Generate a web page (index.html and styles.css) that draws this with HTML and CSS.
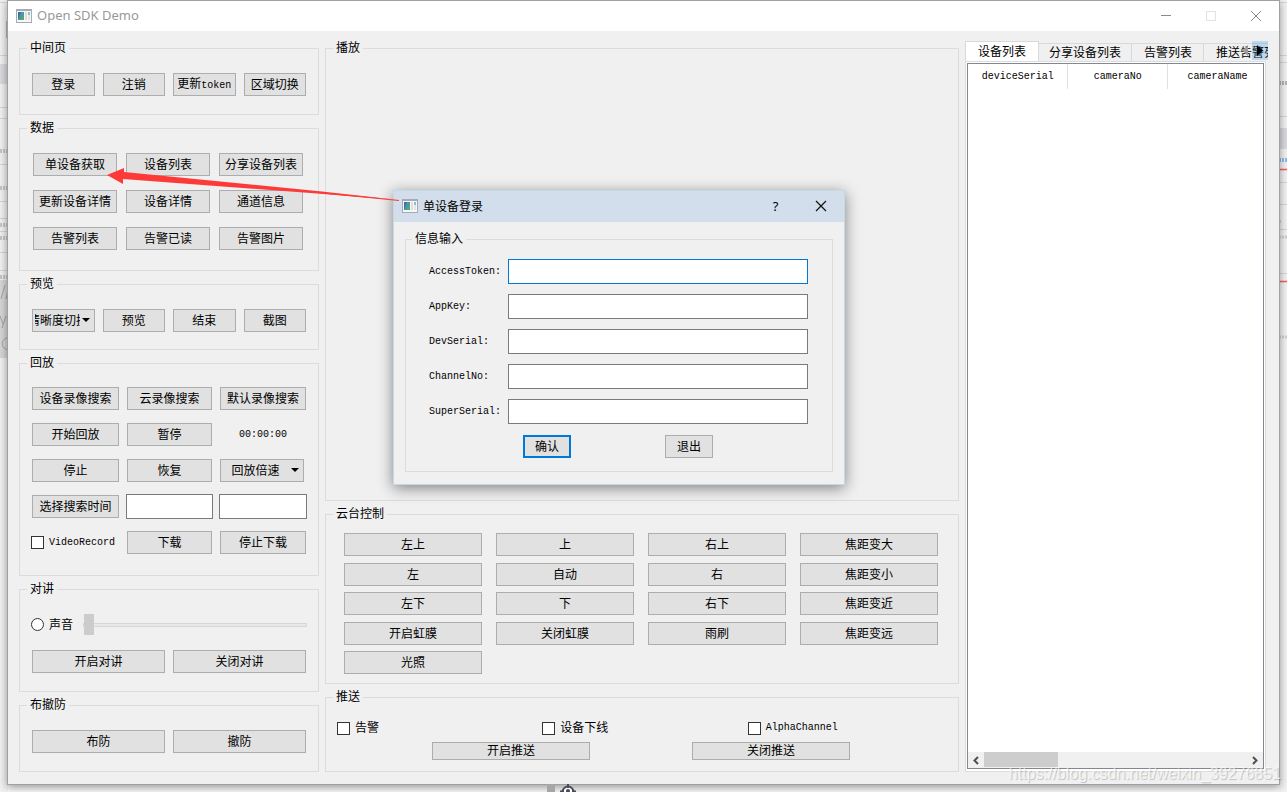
FILE: index.html
```html
<!DOCTYPE html>
<html lang="zh-CN">
<head>
<meta charset="utf-8">
<title>Open SDK Demo</title>
<link rel="stylesheet" href="styles.css">
</head>
<body>
<svg class="backdrop backdrop-left" viewBox="0 0 8 792" width="8" height="792" aria-hidden="true">
  <rect width="8" height="792" fill="#f0f0f0"/>
  <path d="M0 2.500h8M0 55.500h8M0 107.500h8M0 118.500h8M0 164.500h8M0 201.500h8M0 218.500h8M0 231.500h8M0 252.500h8M0 270.500h8" stroke="#d4d4d4"/>
  <path d="M6.500 21v17" stroke="#b8b8b8"/>
  <rect y="64" width="8" height="20" fill="#d8dadf"/>
  <path d="M0 151h8M0 188h8M0 225h8M0 238h8M0 277h8" stroke="#c4c4c4" stroke-width="4" stroke-dasharray="2 1"/>
  <rect y="280" width="8" height="78" fill="#d6d6d6"/>
  <path d="M1 299L5 285M6 299l3-14M0 316l3 8M6 316l-4 12M9 338c-8-1-10 11 0 12" fill="none" stroke="#a2a0a4"/>
</svg>
<svg class="backdrop backdrop-right" viewBox="0 0 8 792" width="8" height="792" aria-hidden="true">
  <rect width="8" height="792" fill="#f2f2f2"/>
  <path d="M0 2.500h8M0 55.500h8M0 62.500h8M0 116.500h8M0 182.500h8M0 204.500h8M0 229.500h8M0 273.500h8" stroke="#d6d6d6"/>
  <rect y="128" width="8" height="21" fill="#d8dadf"/>
  <path d="M0 83h8" stroke="#b4b4b4" stroke-width="4" stroke-dasharray="2 1"/>
  <path d="M0 160h8" stroke="#8ebcf0" stroke-width="4" stroke-dasharray="2 1"/>
  <path d="M0 221.500h2M0 237h8M0 337h8" stroke="#cfcfcf" stroke-width="3" stroke-dasharray="2 1"/>
  <path d="M0 169.500h8M0 281.500h8" stroke="#ff5858" stroke-width="1.500"/>
</svg>

<main class="window">
  <header class="titlebar">
    <svg class="app-icon" viewBox="0 0 16 14" width="16" height="14" aria-hidden="true">
      <rect x=".5" y=".5" width="15" height="13" fill="#f7f7f7" stroke="#a5abb2"/>
      <path d="M0 1h16" stroke="#a5abb2" stroke-width="2"/>
      <rect x="2" y="3" width="6" height="8" fill="#4a97a5"/><path d="M2 11V3h3z" fill="#3c70ad"/><path d="M8 5v6H4z" fill="#57a66f"/>
      <rect x="9" y="3" width="2" height="8" fill="#dedede"/><rect x="12" y="3" width="2" height="3" fill="#8fc2b8"/><rect x="12" y="6" width="2" height="5" fill="#e4e4e4"/>
    </svg>
    <h1 class="title">Open SDK Demo</h1>
    <button class="caption-button" aria-label="最小化"><svg viewBox="0 0 12 12" width="12" height="12"><path d="M1 5.500h10" stroke="#8a8a8a"/></svg></button>
    <button class="caption-button" aria-label="最大化" disabled><svg viewBox="0 0 12 12" width="12" height="12"><rect x="1.500" y="1.500" width="9" height="9" fill="none" stroke="#e2e2e2"/></svg></button>
    <button class="caption-button" aria-label="关闭"><svg viewBox="0 0 12 12" width="12" height="12"><path d="M1 1l10 10M11 1L1 11" stroke="#8a8a8a"/></svg></button>
  </header>

  <div class="content">
    <div class="column">
      <fieldset class="group">
        <legend>中间页</legend>
        <div class="grid four">
          <button class="btn">登录</button><button class="btn">注销</button><button class="btn">更新<span class="latin">token</span></button><button class="btn">区域切换</button>
        </div>
      </fieldset>
      <fieldset class="group data">
        <legend>数据</legend>
        <div class="grid three">
          <button class="btn">单设备获取</button><button class="btn">设备列表</button><button class="btn">分享设备列表</button>
          <button class="btn">更新设备详情</button><button class="btn">设备详情</button><button class="btn">通道信息</button>
          <button class="btn">告警列表</button><button class="btn">告警已读</button><button class="btn">告警图片</button>
        </div>
      </fieldset>
      <fieldset class="group preview">
        <legend>预览</legend>
        <div class="grid four">
          <span class="select-wrap"><select class="btn select clipped" aria-label="清晰度切换"><option>清晰度切换</option></select></span>
          <button class="btn">预览</button><button class="btn">结束</button><button class="btn">截图</button>
        </div>
      </fieldset>
      <fieldset class="group playback">
        <legend>回放</legend>
        <div class="grid playback-grid">
          <button class="btn">设备录像搜索</button><button class="btn">云录像搜索</button><button class="btn">默认录像搜索</button>
          <button class="btn">开始回放</button><button class="btn">暂停</button><output class="latin clock">00:00:00</output>
          <button class="btn">停止</button><button class="btn">恢复</button>
          <span class="select-wrap speed"><select class="btn select" aria-label="回放倍速"><option>回放倍速</option></select></span>
          <button class="btn">选择搜索时间</button><input class="field time" type="text" aria-label="开始时间"><input class="field time" type="text" aria-label="结束时间">
          <label class="check record"><input type="checkbox"><span class="latin">VideoRecord</span></label><button class="btn">下载</button><button class="btn">停止下载</button>
        </div>
      </fieldset>
      <fieldset class="group">
        <legend>对讲</legend>
        <div class="sound">
          <label class="check"><input type="radio"><span>声音</span></label>
          <input class="slider" type="range" min="0" max="100" value="0" aria-label="音量">
        </div>
        <div class="grid two"><button class="btn">开启对讲</button><button class="btn">关闭对讲</button></div>
      </fieldset>
      <fieldset class="group">
        <legend>布撤防</legend>
        <div class="grid two"><button class="btn">布防</button><button class="btn">撤防</button></div>
      </fieldset>
    </div>

    <div class="column">
      <fieldset class="group player"><legend>播放</legend></fieldset>
      <fieldset class="group ptz">
        <legend>云台控制</legend>
        <div class="grid ptz-grid">
          <button class="btn">左上</button><button class="btn">上</button><button class="btn">右上</button><button class="btn">焦距变大</button>
          <button class="btn">左</button><button class="btn">自动</button><button class="btn">右</button><button class="btn">焦距变小</button>
          <button class="btn">左下</button><button class="btn">下</button><button class="btn">右下</button><button class="btn">焦距变近</button>
          <button class="btn">开启虹膜</button><button class="btn">关闭虹膜</button><button class="btn">雨刷</button><button class="btn">焦距变远</button>
          <button class="btn">光照</button>
        </div>
      </fieldset>
      <fieldset class="group push">
        <legend>推送</legend>
        <div class="push-options">
          <label class="check"><input type="checkbox"><span>告警</span></label>
          <label class="check"><input type="checkbox"><span>设备下线</span></label>
          <label class="check"><input type="checkbox"><span class="latin">AlphaChannel</span></label>
        </div>
        <div class="push-actions"><button class="btn">开启推送</button><button class="btn">关闭推送</button></div>
      </fieldset>
    </div>

    <section class="lists">
      <nav class="tabs" role="tablist">
        <button class="tab active" role="tab" aria-selected="true">设备列表</button>
        <button class="tab" role="tab">分享设备列表</button>
        <button class="tab" role="tab">告警列表</button>
        <button class="tab" role="tab">推送告警列表</button>
        <button class="tab-scroll" aria-label="向左"><svg viewBox="0 0 16 19" width="16" height="19"><path d="M12 4v11L6 9.500z" fill="#9c9c9c"/></svg></button>
        <button class="tab-scroll next" aria-label="向右"><svg viewBox="0 0 16 19" width="16" height="19"><path d="M5 4v11l6-5.500z" fill="#000"/></svg></button>
      </nav>
      <div class="pane">
        <div class="table-box">
          <div class="table-view">
            <table class="table">
              <thead><tr><th class="latin">deviceSerial</th><th class="latin">cameraNo</th><th class="latin">cameraName</th></tr></thead>
            </table>
          </div>
          <div class="scrollbar">
            <button class="scroll-button" aria-label="向左滚动"><svg viewBox="0 0 16 15" width="16" height="15"><path d="M10 4L6.500 7.500 10 11" fill="none" stroke="#505050" stroke-width="2"/></svg></button>
            <div class="track"><div class="thumb"></div></div>
            <button class="scroll-button" aria-label="向右滚动"><svg viewBox="0 0 16 15" width="16" height="15"><path d="M6 4l3.500 3.500L6 11" fill="none" stroke="#505050" stroke-width="2"/></svg></button>
          </div>
        </div>
      </div>
    </section>
  </div>
</main>

<svg class="bottom-icons" viewBox="0 0 32 8" width="32" height="8" aria-hidden="true">
  <rect width="8" height="8" fill="#a6a6a6"/>
  <circle cx="21" cy="8" r="5.500" fill="#fff" stroke="#484a59" stroke-width="2"/><path d="M21 0v4M13 7.500h4M25 7.500h4" stroke="#484a59" stroke-width="2"/><circle cx="21" cy="7" r="2" fill="#484a59"/>
</svg>

<section class="dialog" role="dialog" aria-label="单设备登录">
  <header class="dialog-title">
    <svg class="app-icon" viewBox="0 0 16 14" width="16" height="14" aria-hidden="true">
      <rect x=".5" y=".5" width="15" height="13" fill="#f7f7f7" stroke="#a5abb2"/>
      <path d="M0 1h16" stroke="#a5abb2" stroke-width="2"/>
      <rect x="2" y="3" width="6" height="8" fill="#4a97a5"/><path d="M2 11V3h3z" fill="#3c70ad"/><path d="M8 5v6H4z" fill="#57a66f"/>
      <rect x="9" y="3" width="2" height="8" fill="#dedede"/><rect x="12" y="3" width="2" height="3" fill="#8fc2b8"/><rect x="12" y="6" width="2" height="5" fill="#e4e4e4"/>
    </svg>
    <h2 class="title">单设备登录</h2>
    <button class="caption-button help" aria-label="帮助">?</button>
    <button class="caption-button" aria-label="关闭"><svg viewBox="0 0 12 12" width="12" height="12"><path d="M1 1l10 10M11 1L1 11" stroke="#111" stroke-width="1.200"/></svg></button>
  </header>
  <form class="dialog-body">
    <fieldset class="group login">
      <legend>信息输入</legend>
      <div class="form-rows">
        <label class="latin" for="token">AccessToken:</label><input class="field focused" id="token" type="text">
        <label class="latin" for="key">AppKey:</label><input class="field" id="key" type="text">
        <label class="latin" for="dev">DevSerial:</label><input class="field" id="dev" type="text">
        <label class="latin" for="channel">ChannelNo:</label><input class="field" id="channel" type="text">
        <label class="latin" for="super">SuperSerial:</label><input class="field" id="super" type="text">
      </div>
      <div class="form-actions"><button class="btn default" type="button">确认</button><button class="btn" type="button">退出</button></div>
    </fieldset>
  </form>
</section>

<svg class="arrow" viewBox="0 0 300 40" width="300" height="40" aria-hidden="true">
  <path d="M0 9L17 2v4L215 25.500 292 34 210 27.500 16 13v5z" fill="#fd3a37"/>
  <path d="M210 26.500L292 34.500" fill="none" stroke="#fd3a37"/>
</svg>
<p class="watermark">https://blog.csdn.net/weixin_39276851</p>
</body>
</html>
```
FILE: styles.css
```css
* { box-sizing: border-box; }
body {
  position: relative;
  display: flex;
  min-height: 100vh;
  margin: 0;
  padding: 0 7px 7px;
  background: #f7f7f7;
  color: #000;
  font: 12px/14px "Liberation Sans", "Noto Sans CJK SC", sans-serif;
  overflow: hidden;
}
button, input, select { font: inherit; color: inherit; margin: 0; }
button { padding: 0; border: 0; background: none; }
svg { display: block; }
.latin { font-family: "Liberation Mono", monospace; font-size: 10px; font-weight: 400; }

.backdrop { position: absolute; top: 0; }
.backdrop-left { left: 0; }
.backdrop-right { right: 0; }
.bottom-icons { position: absolute; left: 547px; bottom: 0; }

.window {
  position: relative;
  flex: 1;
  display: flex;
  flex-direction: column;
  border: 1px solid #a0a0a0;
  background: #f0f0f0;
  box-shadow: 0 2px 8px #0006;
}
.titlebar, .dialog-title { display: flex; align-items: center; height: 30px; padding-left: 8px; background: #fff; }
.titlebar { padding-right: 1px; }
.title { flex: 1; margin: 0 0 0 5px; color: #999; font: 13px/18px "Noto Sans", sans-serif; }
.titlebar .title { padding-bottom: 2px; }
.caption-button { display: flex; align-items: center; justify-content: center; width: 45px; height: 30px; }

.content {
  flex: 1;
  display: grid;
  grid-template-columns: 300px 1fr 303px;
  gap: 6px;
  padding: 10px 11px 12px;
}
.column { display: flex; flex-direction: column; gap: 6px; }

.group { min-width: 0; margin: 0; padding: 18px 12px; border: 1px solid #dcdcdc; }
.group legend { margin-left: -5px; padding: 1px 3px 0; line-height: 13px; }
.data { padding: 18px 15px 20px 13px; }
.group.data legend { margin-left: -6px; }
.preview { padding-bottom: 17px; }
.playback { padding: 17px 12px 21px; }
.player { flex: 1; }
.ptz { padding: 12px 20px 9px 18px; }
.group.ptz legend { margin-left: -11px; }
.push { padding: 17px 5px 11px 11px; }
.group.push legend { margin-left: -4px; }

.btn { height: 23px; min-width: 0; padding-top: 1px; border: 1px solid #adadad; border-radius: 0; background: #e1e1e1; text-align: center; white-space: nowrap; overflow: hidden; }
.grid { display: grid; gap: 8px; }
.four { grid-template-columns: repeat(4, 1fr); }
.three { grid-template-columns: repeat(3, 1fr); gap: 14px 9px; }
.two { grid-template-columns: 1fr 1fr; }
.playback-grid { grid-template-columns: 87fr 85fr 86fr; grid-auto-rows: 23px; gap: 13px 8px; align-items: center; }
.ptz-grid { grid-template-columns: repeat(4, 1fr); min-height: 141px; align-content: space-between; gap: 6px 14px; }

.select-wrap { position: relative; display: flex; min-width: 0; }
.select-wrap::after { content: ""; position: absolute; right: 5px; top: 9px; border: solid transparent; border-width: 4px 4px 0; border-top-color: #000; }
.select { appearance: none; width: 100%; padding: 1px 16px 0 3px; }
.clipped { padding: 1px 14px 0 2px; text-align: left; text-indent: -7px; }
.speed { margin-right: 2px; }
.clock { text-align: center; }
.field { width: 100%; height: 25px; padding: 0 3px; border: 1px solid #7a7a7a; border-radius: 0; outline: 0; background: #fff; }
.focused { border-color: #0078d7; }
.time { width: auto; min-width: 0; margin: 0 -1px; }

.check { display: flex; align-items: center; gap: 5px; white-space: nowrap; }
.check input { appearance: none; flex: none; width: 13px; height: 13px; border: 1px solid #333; background: #fff; }
.check input[type="radio"] { border-radius: 50%; }
.record { margin-left: -1px; }
.sound { display: flex; align-items: center; gap: 10px; margin: 0 -1px 15px; height: 21px; }
.slider { appearance: none; flex: 1; min-width: 0; height: 21px; background: none; }
.slider::-webkit-slider-runnable-track { height: 4px; border: 1px solid #d6d6d6; background: #e7eaea; }
.slider::-webkit-slider-thumb { appearance: none; width: 10px; height: 21px; margin-top: -10px; background: #ccc; }

.push-options { display: grid; grid-template-columns: repeat(3, 1fr); margin-bottom: 8px; height: 13px; }
.push-actions { display: flex; justify-content: center; gap: 102px; margin-right: 8px; }
.push-actions .btn { width: 158px; height: 18px; line-height: 15px; }

.lists { display: flex; flex-direction: column; min-width: 0; }
.tabs { position: relative; display: flex; align-items: flex-end; height: 20px; overflow: hidden; }
.tab { flex: none; height: 18px; padding: 1px 10px 0; border: solid #d9d9d9; border-width: 1px 1px 0 0; background: #f0f0f0; }
.tab:nth-child(n+3) { padding: 1px 11px 0 12px; }
.tab.active { height: 20px; padding: 1px 12px 0; border-left-width: 1px; background: #fff; }
.tab-scroll { position: absolute; right: 16px; top: 0; }
.tab-scroll.next { right: 0; background: #0078d733; }
.pane { flex: 1; display: flex; margin-right: 2px; padding: 1px 1px 2px; border: 1px solid #dcdcdc; background: #fff; }
.table-box { flex: 1; min-width: 0; display: flex; flex-direction: column; border: 1px solid #828790; }
.table-view { flex: 1; overflow: hidden; }
.table { width: 300px; table-layout: fixed; border-collapse: collapse; }
.table th { height: 25px; padding: 1px 0 0; border-right: 1px solid #e0e0e0; }
.scrollbar { display: flex; height: 16px; background: #f0f0f0; }
.scroll-button { width: 16px; height: 16px; }
.track { flex: 1; }
.thumb { width: 28%; height: 15px; background: #cdcdcd; }

.dialog { position: absolute; left: 393px; top: 190px; width: 452px; border: 1px solid #c5d8e8; background: #f0f0f0; box-shadow: 0 3px 14px #0007; }
.dialog-title { height: 31px; padding: 0 1px 1px 8px; background: #d2deeb; }
.dialog-title .title { color: #000; font: 12px/18px "Noto Sans CJK SC", sans-serif; }
.help { font: 13px/18px "Noto Sans", sans-serif; }
.dialog-body { padding: 10px 11px 12px; }
.login { padding: 13px 24px; }
.group.login legend { margin-left: -18px; }
.form-rows { display: grid; grid-template-columns: 79px 1fr; gap: 10px 0; align-items: center; margin-left: -1px; }
.form-rows label { padding-top: 1px; }
.form-actions { display: flex; gap: 94px; margin: 11px 0 0 93px; }
.form-actions .btn { width: 48px; }
.btn.default { padding: 0; border: 2px solid #0078d7; }

.arrow { position: absolute; left: 107px; top: 166px; pointer-events: none; }
.watermark { position: absolute; right: 6px; bottom: 9px; margin: 0; color: #fffa; font: 16px/18px "Liberation Sans", sans-serif; text-shadow: 1px 1px 1px #0003; }
```
